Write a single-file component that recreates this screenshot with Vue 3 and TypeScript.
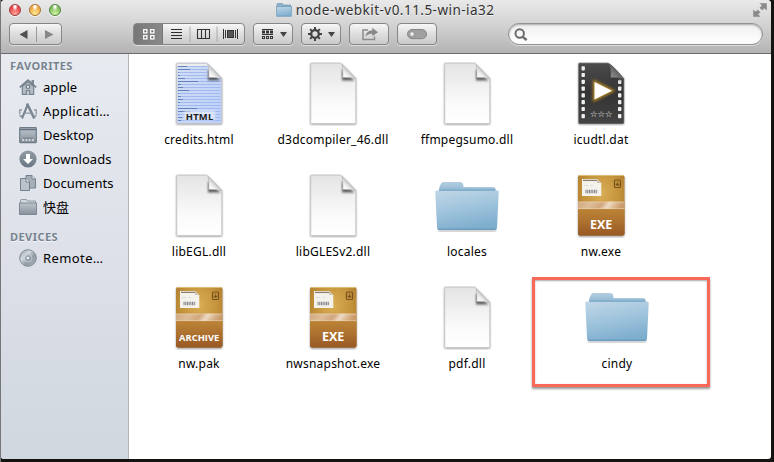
<script setup lang="ts">
type Kind = 'html' | 'page' | 'movie' | 'folder' | 'exe' | 'archive'
interface FileItem { name: string; kind: Kind; marked?: boolean }
interface Place { name: string; icon: string; wide?: boolean }

const files: FileItem[] = [
  { name: 'credits.html', kind: 'html' },
  { name: 'd3dcompiler_46.dll', kind: 'page' },
  { name: 'ffmpegsumo.dll', kind: 'page' },
  { name: 'icudtl.dat', kind: 'movie' },
  { name: 'libEGL.dll', kind: 'page' },
  { name: 'libGLESv2.dll', kind: 'page' },
  { name: 'locales', kind: 'folder' },
  { name: 'nw.exe', kind: 'exe' },
  { name: 'nw.pak', kind: 'archive' },
  { name: 'nwsnapshot.exe', kind: 'exe' },
  { name: 'pdf.dll', kind: 'page' },
  { name: 'cindy', kind: 'folder', marked: true },
]

const favorites: Place[] = [
  { name: 'apple', icon: 'home' },
  { name: 'Applicati…', icon: 'apps', wide: true },
  { name: 'Desktop', icon: 'desktop' },
  { name: 'Downloads', icon: 'down' },
  { name: 'Documents', icon: 'docs' },
  { name: '快盘', icon: 'folder' },
]
const devices: Place[] = [{ name: 'Remote…', icon: 'disc', wide: true }]
const groups = [
  { title: 'FAVORITES', places: favorites },
  { title: 'DEVICES', places: devices },
]
const textLines = [5, 8, 11, 14, 17, 20, 23, 26, 29, 32, 35, 38, 41, 44, 47, 50, 53, 56, 59]
const lineEnds = [20, 23, 12, 13, 18, 31, 14, 16, 22, 12, 14, 16, 13, 12, 30, 23, 12, 15, 14]
const holes = [3.5, 10.2, 17, 23.8, 30.6, 37.4, 44.2, 51.4]
</script>

<template>
  <div class="screen">
    <svg class="defs" width="0" height="0">
      <defs>
        <linearGradient id="paper" x1="0" y1="0" x2="0" y2="1"><stop offset="0" stop-color="#e4e4e4" /><stop offset=".65" stop-color="#fafafa" /><stop offset="1" stop-color="#fff" /></linearGradient>
        <linearGradient id="blue" x1="0" y1="0" x2="1" y2="1"><stop offset="0" stop-color="#d3e0f2" /><stop offset="1" stop-color="#bccffa" /></linearGradient>
        <linearGradient id="flap" x1="0" y1="1" x2=".6" y2=".4"><stop offset="0" stop-color="#fff" /><stop offset=".5" stop-color="#f4f4f4" /><stop offset="1" stop-color="#bbb" /></linearGradient>
        <linearGradient id="dark" x1="0" y1="0" x2="0" y2="1"><stop offset="0" stop-color="#4c4c4c" /><stop offset=".5" stop-color="#333" /><stop offset="1" stop-color="#444" /></linearGradient>
        <linearGradient id="darkflap" x1="0" y1="1" x2="1" y2="0"><stop offset="0" stop-color="#999" /><stop offset="1" stop-color="#333" /></linearGradient>
        <linearGradient id="folderFront" x1=".2" y1="0" x2=".5" y2="1"><stop offset="0" stop-color="#bdd5e6" /><stop offset=".5" stop-color="#9ec3dc" /><stop offset="1" stop-color="#7dadcd" /></linearGradient>
        <linearGradient id="folderBack" x1="0" y1="0" x2="0" y2="1"><stop offset="0" stop-color="#b2cee1" /><stop offset="1" stop-color="#82aecb" /></linearGradient>
        <radialGradient id="box" cx=".5" cy=".3" r=".85"><stop offset="0" stop-color="#d9ae55" /><stop offset=".45" stop-color="#c4933b" /><stop offset="1" stop-color="#976325" /></radialGradient>
        <linearGradient id="boxLow" x1="0" y1="0" x2="0" y2="1"><stop offset="0" stop-color="#bb8437" /><stop offset=".5" stop-color="#ac702f" /><stop offset="1" stop-color="#985924" /></linearGradient>
        <linearGradient id="tape" x1="0" y1="0" x2="1" y2=".12"><stop offset="0" stop-color="#cfa77a" /><stop offset=".3" stop-color="#ddbd99" /><stop offset=".55" stop-color="#d1a77d" /><stop offset=".7" stop-color="#eddbc6" /><stop offset=".85" stop-color="#dab890" /><stop offset="1" stop-color="#c99b6d" /></linearGradient>
        <linearGradient id="slate" x1="0" y1="0" x2="0" y2="1"><stop offset="0" stop-color="#929da7" /><stop offset="1" stop-color="#697684" /></linearGradient>
        <linearGradient id="slateLight" x1="0" y1="0" x2="0" y2="1"><stop offset="0" stop-color="#bdc4cb" /><stop offset="1" stop-color="#87919b" /></linearGradient>
        <linearGradient id="disc" x1="0" y1="0" x2="1" y2="1"><stop offset="0" stop-color="#8b959e" /><stop offset=".35" stop-color="#d4d9de" /><stop offset=".6" stop-color="#929ca6" /><stop offset="1" stop-color="#a9b1b9" /></linearGradient>
        <filter id="soft" x="-20%" y="-20%" width="140%" height="140%"><feGaussianBlur stdDeviation="1" /></filter>
        <filter id="glow" x="-50%" y="-50%" width="200%" height="200%"><feGaussianBlur stdDeviation="1.6" /></filter>
      </defs>
    </svg>

    <div class="window">
      <header class="chrome">
        <div class="titlebar">
          <div class="lights"><i class="red" /><i class="amber" /><i class="green" /></div>
          <div class="title">
            <svg width="16" height="14" viewBox="0 0 16 14"><path d="M1 3V1.5Q1 .5 2 .5H6Q7 .5 7 2H14.5V5H1Z" fill="#8db5d0" stroke="#7197b0" stroke-width=".7" /><path d="M.4 3.4H15.6L15.2 13.3H.8Z" fill="url(#folderFront)" stroke="#6594b2" stroke-width=".7" /></svg>
            <span>node-webkit-v0.11.5-win-ia32</span>
          </div>
          <svg class="full" width="14" height="14" viewBox="0 0 14 14"><path d="M7 .5H13.5V7L11.4 4.9 9.2 7.1 6.9 4.8 9.1 2.6ZM.5 7 2.6 9.1 4.8 6.9 7.1 9.2 4.9 11.4 7 13.5H.5Z" fill="#8a8a8a" stroke="#777" stroke-width=".4" /></svg>
        </div>
        <div class="toolbar">
          <div class="control nav">
            <svg width="53" height="20" viewBox="0 0 53 20"><path d="M26.5 2.5V18" stroke="#999" /><path d="M9.5 10.5 17.5 6V15Z" fill="#505050" /><path d="M43.5 10.5 35 6V15Z" fill="#888" /></svg>
          </div>
          <div class="control views">
            <svg width="110" height="20" viewBox="0 0 110 20">
              <path d="M56 2.5V18M83 2.5V18" stroke="#aaa" />
              <g fill="#666" stroke="#fff" stroke-width="1.3"><rect x="9.7" y="5.7" width="3.2" height="3.2" /><rect x="16.7" y="5.7" width="3.2" height="3.2" /><rect x="9.7" y="11.7" width="3.2" height="3.2" /><rect x="16.7" y="11.7" width="3.2" height="3.2" /></g>
              <path d="M37 5.5H48M37 8.5H48M37 11.5H48M37 14.5H48" stroke="#2d2d2d" stroke-width="1.1" />
              <path d="M63.5 5.5H75.5V14.5H63.5ZM67.5 5V15M71.5 5V15M63 5.5H76" fill="none" stroke="#333" stroke-width="1.1" />
              <rect x="93.5" y="6.5" width="6" height="7" fill="#555" stroke="#333" /><path d="M89.5 5V15M91.5 6V14M101.5 6V14M103.5 5V15" stroke="#333" />
            </svg>
          </div>
          <div class="control single">
            <svg width="38" height="20" viewBox="0 0 38 20"><path d="M8 5.5H19M8 10.5H19" stroke="#333" /><g fill="#ddd" stroke="#333"><rect x="8.5" y="7" width="2" height="2" /><rect x="12.5" y="7" width="2" height="2" /><rect x="16.5" y="7" width="2" height="2" /><rect x="8.5" y="12.5" width="2" height="2" /><rect x="12.5" y="12.5" width="2" height="2" /><rect x="16.5" y="12.5" width="2" height="2" /></g><path d="M26 8H33L29.5 13Z" fill="#454545" /></svg>
          </div>
          <div class="control single">
            <svg width="38" height="20" viewBox="0 0 38 20"><g fill="none" stroke="#444"><circle cx="13" cy="10" r="3.8" stroke-width="2.3" /><path d="M13 3V6M13 14V17M6 10H9M17 10H20M8.1 5.1 10.1 7.1M15.9 12.9 17.9 14.9M17.9 5.1 15.9 7.1M10.1 12.9 8.1 14.9" stroke-width="2" /></g><path d="M26 8H33L29.5 13Z" fill="#454545" /></svg>
          </div>
          <div class="control single">
            <svg width="38" height="20" viewBox="0 0 38 20"><path d="M18 6H13V15.5H24.5V12.5" fill="none" stroke="#8c8c8c" stroke-width="1.5" /><path d="M15.5 12.5C16 8.3 19 6.5 22.3 6.5V3.8L28 8.2 22.3 12.3V9.7C19.5 9.5 17.6 10.5 15.5 12.5Z" fill="#898989" /></svg>
          </div>
          <div class="control single">
            <svg width="38" height="20" viewBox="0 0 38 20"><rect x="9.5" y="5.5" width="19" height="9.2" rx="4.6" fill="#a0a0a0" stroke="#858585" /><circle cx="14" cy="10.1" r="2.3" fill="#eee" stroke="#888" stroke-width=".7" /></svg>
          </div>
          <div class="search">
            <svg width="14" height="14" viewBox="0 0 14 14"><circle cx="5.7" cy="5.5" r="4.2" fill="none" stroke="#6b6b6b" stroke-width="2" /><path d="M8.9 8.8 12.6 12.2" stroke="#6b6b6b" stroke-width="2.4" /></svg>
          </div>
        </div>
      </header>

      <div class="body">
        <aside class="sidebar">
          <section v-for="g in groups" :key="g.title">
            <h2>{{ g.title }}</h2>
            <div v-for="p in g.places" :key="p.name" class="place">
              <svg width="18" height="18" viewBox="0 0 18 18">
                <template v-if="p.icon === 'home'"><path d="M12.5 2H15V7H12.5Z" fill="#7f8b96" /><path d="M3.3 8.5V16.4H14.7V8.5L9 3.5Z" fill="#b3bbc3" stroke="#76838f" stroke-width="1.2" /><path d="M.8 9.4 9 2 17.2 9.4" fill="none" stroke="#75818d" stroke-width="1.6" /><circle cx="9" cy="8.7" r="1.8" fill="#e2e6ec" stroke="#6c7884" stroke-width="1.2" /><path d="M6.8 12H11.2V16.5H6.8Z" fill="#7c8893" /><path d="M8.2 13.2H9.8V16.5H8.2Z" fill="#dce0e6" /></template>
                <template v-else-if="p.icon === 'apps'"><path d="M3 16.5 8.8 2.5" fill="none" stroke="#758290" stroke-width="2" /><path d="M8 1.5 15.3 16.5" stroke="#7a8793" stroke-width="2.6" /><path d="M.8 12.5V7.8H3.2M5.5 11.2H12.5M14.8 7.8H17.2V12.5" fill="none" stroke="#8a959f" stroke-width="1.3" /><path d="M.5 14H4.5M13.5 14H17.5" stroke="#83909b" stroke-width="1.6" /></template>
                <template v-else-if="p.icon === 'desktop'"><rect x=".7" y="1.7" width="16.6" height="15" rx=".8" fill="url(#slateLight)" stroke="#6e7b87" stroke-width="1.2" /><path d="M1 3.5H17" stroke="#65727f" stroke-width="1.5" /><path d="M4 11.5H14L16 15H2Z" fill="#7d8894" /><path d="M3.2 14H15" stroke="#eef0f3" stroke-width="1.6" stroke-dasharray="2 1.2" /></template>
                <template v-else-if="p.icon === 'down'"><circle cx="9" cy="9" r="8.6" fill="url(#slate)" /><path d="M7 4H11V9H14L9 14 4 9H7Z" fill="#fff" /></template>
                <template v-else-if="p.icon === 'docs'"><path d="M7 1.5H13L16.5 5V14H7Z" fill="#a6afb8" stroke="#74808d" /><path d="M13 1.5V5H16.5" fill="#e8ebef" stroke="#74808d" /><path d="M1.5 4.5H7L10.5 8V16.5H1.5Z" fill="#bbc2c9" stroke="#74808d" /><path d="M7 4.5V8H10.5" fill="#eceff2" stroke="#74808d" /></template>
                <template v-else-if="p.icon === 'folder'"><path d="M1.5 5V2.5Q1.5 1.5 2.5 1.5H7Q8 1.5 8.5 3H16.5V7H1.5Z" fill="#d3d9df" stroke="#7e8994" stroke-width=".8" /><path d="M.5 5H17.5V16.5H.5Z" fill="url(#slateLight)" stroke="#75818c" stroke-width=".9" /></template>
                <template v-else><circle cx="9" cy="9" r="8.3" fill="url(#disc)" stroke="#818c97" /><circle cx="9" cy="9" r="4" fill="none" stroke="#c9ced5" stroke-width=".8" /><circle cx="9" cy="9" r="2.1" fill="#e7eaee" stroke="#7f8a95" /></template>
              </svg>
              <span :class="{ wide: p.wide }">{{ p.name }}</span>
            </div>
          </section>
        </aside>

        <main class="files">
          <div v-for="f in files" :key="f.name" class="file" :class="{ marked: f.marked }">
            <svg width="64" height="64" viewBox="0 0 64 64">
              <template v-if="f.kind === 'folder'">
                <path d="M3 56H61V57.5H3Z" fill="#333" opacity=".45" filter="url(#soft)" />
                <path d="M4.5 16V14L6.2 10.2Q6.6 8.6 8.2 8.6H25.6Q27.5 8.6 28 11V13.5H58.5Q60.5 13.5 60.5 16V20H4.5Z" fill="url(#folderBack)" stroke="#92b6ce" stroke-width=".6" />
                <path d="M1.5 16.5H62.5Q64 16.5 63.7 18.5L62 54Q61.9 56 60 56H4Q2.2 56 2.1 54L.3 18.5Q.1 16.5 1.5 16.5Z" fill="url(#folderFront)" />
                <path d="M4 16.2H60" stroke="#79a8c8" stroke-width="1.2" /><path d="M3 55.2H61" stroke="#6394b5" />
              </template>
              <template v-else-if="f.kind === 'exe' || f.kind === 'archive'">
                <rect x="9" y="2" width="46.5" height="61" rx="2.5" fill="#555" opacity=".55" filter="url(#soft)" />
                <rect x="9" y="1" width="46.5" height="60.5" rx="2.2" fill="url(#box)" />
                <path d="M9 35H55.5V59.3Q55.5 61.5 53.3 61.5H11.2Q9 61.5 9 59.3Z" fill="url(#boxLow)" />
                <path d="M10.5 1.5H54" stroke="#e0be75" /><path d="M9 27.5H55.5V35H9Z" fill="url(#tape)" /><path d="M9 28.2H55.5M9 34.6H55.5" stroke="#efd5b5" stroke-width=".8" opacity=".65" />
                <path d="M13 5H28L32.3 9V22H13Z" fill="#f5f2ec" /><path d="M14 6.4H28" stroke="#8c806d" stroke-width="1.3" /><path d="M15 11.5H19M21 11.5H24" stroke="#ddd" /><path d="M28 5V9H32.3" fill="#cbc4b5" /><path d="M16.5 17.5H28.5" stroke="#85878d" stroke-width="3.6" stroke-dasharray="1.1 .6" />
                <rect x="45.5" y="6" width="6" height="7.5" rx="1" fill="none" stroke="#79531c" stroke-width="1.2" /><path d="M48.5 7.5V11M46.8 10H50.2L48.5 12Z" fill="#79531c" stroke="#79531c" stroke-width=".7" />
                <text x="32.2" :y="f.kind === 'exe' ? 55.3 : 54.5" text-anchor="middle" :class="f.kind" class="stamp">{{ f.kind === 'exe' ? 'EXE' : 'ARCHIVE' }}</text>
              </template>
              <template v-else>
                <path d="M9.5 1.5H39.5L55 17V62.5H9.5Z" fill="#444" opacity=".6" filter="url(#soft)" />
                <path d="M10.3 1.2H38.5Q42 1.2 54.7 16.5V60.5Q54.7 61.5 53.7 61.5H10.3Q9.8 61.5 9.8 61V1.7Q9.8 1.2 10.3 1.2Z" :fill="f.kind === 'html' ? 'url(#blue)' : f.kind === 'movie' ? 'url(#dark)' : 'url(#paper)'" :stroke="f.kind === 'movie' ? '#555' : '#c5c5c5'" stroke-width=".7" />
                <g v-if="f.kind === 'html'">
                  <path d="M10.3 2H40V4H10.3Z" fill="#eceeed" />
                  <path v-for="(y, i) in textLines" :key="y" :d="`M11 ${y - .5}H${i < 4 ? 40 : 53.5}`" stroke="#9db6ef" stroke-width=".9" />
                  <path v-for="(y, i) in textLines" :key="-y" :d="`M11 ${y - .5}H${lineEnds[i]}`" stroke="#6580be" stroke-width="1" />
                  <rect x="17" y="49" width="31" height="9" fill="#e5edf9" opacity=".8" filter="url(#soft)" />
                  <text x="32.6" y="57.5" text-anchor="middle" class="html">HTML</text>
                </g>
                <g v-if="f.kind === 'movie'">
                  <g fill="#f0f0f0"><rect v-for="y in holes" :key="y" x="12.5" :y="y + .7" width="3.4" height="4.2" rx=".8" /><rect v-for="y in holes.slice(2)" :key="-y" x="49" :y="y + .7" width="3.4" height="4.2" rx=".8" /></g>
                  <path d="M25.5 20V37.5L43 28.8Z" fill="#b88a21" stroke="#b88a21" stroke-width="3" filter="url(#glow)" /><path d="M25.5 20V37.5L43 28.8Z" fill="#fff" />
                  <text x="32.3" y="55.3" text-anchor="middle" class="stars">☆☆☆</text>
                </g>
                <path d="M41 7V18.5H53.5Z" fill="#333" :opacity="f.kind === 'movie' ? 0.6 : 0.75" filter="url(#soft)" />
                <path d="M40.8 2.6Q42.3 6 41.8 15.5Q49 15 54.5 16.7Q47 8 40.8 2.6Z" :fill="f.kind === 'movie' ? 'url(#darkflap)' : 'url(#flap)'" :stroke="f.kind === 'movie' ? '#666' : '#aaa'" stroke-width=".5" />
              </template>
            </svg>
            <span>{{ f.name }}</span>
          </div>
        </main>
      </div>
    </div>
  </div>
</template>

<style>
body { margin: 0; overflow: hidden; }
</style>

<style scoped>
* { box-sizing: border-box; }
.screen { width: 774px; height: 462px; padding: 0 3px 3px 1px; background: linear-gradient(90deg, #77777a 0 1px, transparent 1px), #141312; font-family: "Noto Sans", "Noto Sans CJK SC", sans-serif; color: #000; overflow: hidden; }
.defs { position: absolute; }
svg { display: block; flex: none; }
.window { width: 770px; height: 459px; border-radius: 4px 4px 3px 3px; overflow: hidden; background: #fff; }
.chrome { height: 54px; border-bottom: 1px solid #6a6a6a; background: linear-gradient(#e9e9e9, #d2d2d2 48%, #b3b3b3); }
.titlebar { height: 23px; display: grid; grid-template-columns: 80px 1fr 80px; }
.lights { display: flex; gap: 8px; padding: 4px 0 0 8px; }
.lights i { width: 12px; height: 12px; border-radius: 50%; border: 1px solid; box-shadow: 0 1px 0 #f5f5f5; }
.red { background: radial-gradient(ellipse at 50% 15%, #fff 0 10%, transparent 38%), radial-gradient(circle at 50% 90%, #ffaaa0, #e9484a 65%); border-color: #9d3a3d !important; }
.amber { background: radial-gradient(ellipse at 50% 15%, #fff 0 10%, transparent 38%), radial-gradient(circle at 50% 90%, #ffec9b, #efac43 65%); border-color: #a6712f !important; }
.green { background: radial-gradient(ellipse at 50% 15%, #fff 0 10%, transparent 38%), radial-gradient(circle at 50% 90%, #d6f6a5, #80bf60 65%); border-color: #52833d !important; }
.title { display: flex; justify-content: center; gap: 4px; padding: 3px 2px 0 0; font-size: 13.5px; line-height: 15px; color: #333; text-shadow: 0 1px #f5f5f5; white-space: nowrap; letter-spacing: .46px; }
.full { margin: 3px 4px 0 auto; }
.toolbar { display: flex; height: 22px; padding-left: 8px; }
.control { height: 22px; border: 1px solid #868686; border-radius: 4px; background: linear-gradient(#f7f7f7, #dedede 50%, #cacaca); box-shadow: 0 1px #dcdcdc; margin-right: 8px; overflow: hidden; }
.nav { width: 53px; margin-right: 71px; }
.views { width: 112px; background: linear-gradient(90deg, #777 0, #898989 28px, #666 29px, transparent 29px), linear-gradient(#f7f7f7, #dedede 50%, #cacaca); }
.single { width: 40px; }
.search { width: 255px; height: 22px; margin-left: 63px; padding: 4px 5px; border: 1px solid #929292; border-radius: 11px; background: linear-gradient(#f0f0f0, #fff); box-shadow: inset 0 1px 2px #aaa, 0 1px #ddd; }
.body { display: flex; height: 405px; }
.sidebar { width: 128px; padding-top: 4px; background: linear-gradient(#e7ebf0, #dde0e8 50%, #d0d7df); border-right: 1px solid #b4b5b7; }
h2 { height: 16px; margin: 0 0 1px; padding-left: 9px; font-size: 11px; line-height: 16px; color: #77838f; font-weight: 700; text-shadow: 0 1px #f4f7fa; letter-spacing: .45px; }
section + section { margin-top: 10px; }
.place { height: 24px; display: flex; align-items: center; gap: 6px; padding-left: 18px; font-size: 13px; line-height: 18px; white-space: nowrap; letter-spacing: .05px; }
.wide { letter-spacing: .4px; }
.files { display: grid; grid-template-columns: repeat(4, 134px); grid-auto-rows: 112px; align-content: start; padding: 8px 0 0 3px; }
.file { display: flex; flex-direction: column; align-items: center; font-size: 12px; white-space: nowrap; }
.file span { margin-top: 5px; line-height: 17px; letter-spacing: .22px; }
.marked { width: 178px; height: 110px; margin: -9px 0 0 -2px; padding: 5px 8px 0 0; border: 3px solid #f96859; box-shadow: 0 2px 2px #999, inset 0 1px 2px #aaa; }
.marked span { margin-top: 6px; }
.stamp { fill: #fff; font-family: "Open Sans", sans-serif; font-weight: 700; }
.exe { font-size: 12.5px; }
.archive { font-size: 9.4px; }
.html { font-size: 9.4px; font-weight: 700; fill: #222; letter-spacing: .3px; }
.stars { font-family: "DejaVu Sans", sans-serif; font-size: 8.4px; fill: #fff; }
</style>
